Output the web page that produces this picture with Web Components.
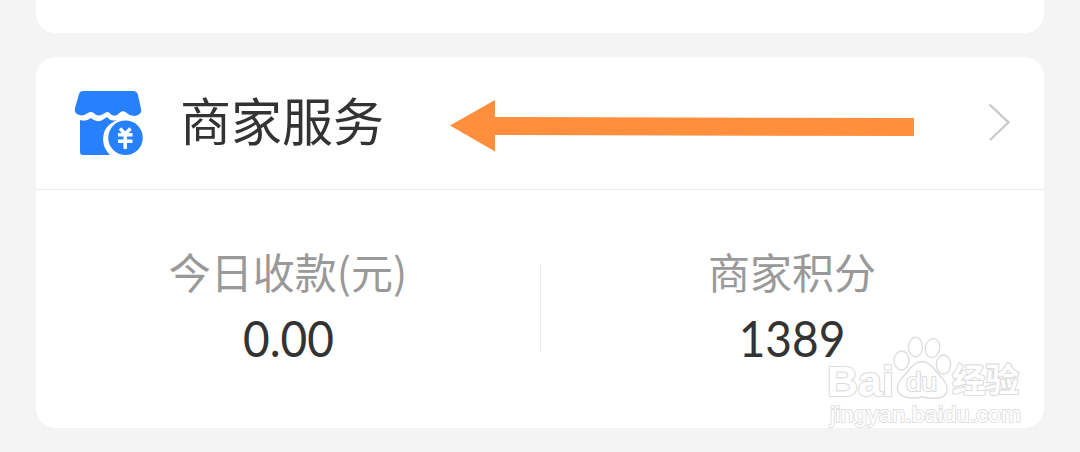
<!DOCTYPE html>
<html lang="zh-CN">
<head>
<meta charset="utf-8">
<title>商家服务</title>
<style>
  body {
    margin: 0;
    height: 452px;
    overflow: hidden;
    background: #f4f4f4;
    color: #333;
    font-family: "Noto Sans CJK SC", sans-serif;
  }
</style>
</head>
<body>
<service-page>
  <panel-card class="previous"></panel-card>
  <panel-card>
    <service-header slot="header">商家服务</service-header>
    <stat-item label="今日收款(元)">0.00</stat-item>
    <stat-item label="商家积分">1389</stat-item>
  </panel-card>
  <site-watermark slot="overlay"></site-watermark>
</service-page>

<script>
class ServicePage extends HTMLElement {
  connectedCallback() {
    this.attachShadow({ mode: 'open' });
    this.shadowRoot.innerHTML = `
      <style>
        :host {
          display: flex;
          flex-direction: column;
          gap: 24px;
          position: relative;
          height: 452px;
          padding: 0 36px;
          box-sizing: border-box;
        }

        ::slotted(.previous) {
          height: 33px;
          border-radius: 0 0 20px 20px;
        }
      </style>
      <slot></slot>
      <slot name="overlay"></slot>
    `;
  }
}

class PanelCard extends HTMLElement {
  connectedCallback() {
    this.attachShadow({ mode: 'open' });
    this.shadowRoot.innerHTML = `
      <style>
        :host {
          display: flex;
          flex-direction: column;
          flex-shrink: 0;
          height: 371px;
          background: #fff;
          border-radius: 20px;
          overflow: hidden;
        }

        .stats {
          display: grid;
          grid-template-columns: 504px 504px;
          padding-top: 51px;
          background: linear-gradient(#ececec, #ececec) 504px 74px / 1px 88px no-repeat;
        }
      </style>
      <slot name="header"></slot>
      <div class="stats"><slot></slot></div>
    `;
  }
}

class ServiceHeader extends HTMLElement {
  connectedCallback() {
    this.attachShadow({ mode: 'open' });
    this.shadowRoot.innerHTML = `
      <style>
        :host {
          display: flex;
          align-items: center;
          height: 133px;
          padding: 0 33px 0 37px;
          box-sizing: border-box;
          border-bottom: 1px solid #ececec;
        }

        svg {
          display: block;
          flex-shrink: 0;
        }

        .title {
          width: 204px;
          margin: -9px 66px 0 35px;
          font-size: 51px;
          line-height: 72px;
          white-space: nowrap;
        }

        .arrow {
          margin-top: 4px;
        }

        .chevron {
          margin-left: auto;
        }
      </style>
      <svg width="72" height="68" viewBox="73 89 72 68">
        <path fill="#2781ff" d="M83 91H133Q137 91 138 95L141 109Q142 113 138 115Q132 118 126 112.5Q123 110 120 112.5Q114 119 109 112.5Q107 111 104 113.5Q98 118 93 112.5Q90 111 87 113.5Q82 117 77 114Q74 112 75 108L79 94Q80 91 83 91Z"/>
        <path fill="#2781ff" d="M80 120Q86 122 91 118Q97 124 104 119L107 117Q111 122 117 120Q108 124 104.5 131Q100 145 110 155H83Q80 155 80 152Z"/>
        <circle cx="125.5" cy="137.8" r="17.3" fill="#2781ff"/>
        <path fill="none" stroke="#fff" stroke-width="3.5" d="M120 128.5L125.2 134L130.5 128.5M118 134.8H132.5M118 141.3H132.5M125.2 133.5V149"/>
      </svg>
      <div class="title"><slot></slot></div>
      <svg class="arrow" width="464" height="54" viewBox="450 98 464 54">
        <path fill="#ff8e3d" d="M450 125.5L495 100V117L914 118V136L495 135V151.5Z"/>
      </svg>
      <svg class="chevron" width="24" height="40" viewBox="987 103 24 40">
        <path fill="none" stroke="#c9c9c9" stroke-width="2.3" d="M989.5 104.5L1008.5 122.3L990 140"/>
      </svg>
    `;
  }
}

class StatItem extends HTMLElement {
  connectedCallback() {
    this.attachShadow({ mode: 'open' });
    this.shadowRoot.innerHTML = `
      <style>
        :host {
          display: flex;
          flex-direction: column;
          align-items: center;
          gap: 7px;
        }

        .label {
          font-size: 42px;
          line-height: 60px;
          color: #999;
          white-space: nowrap;
        }

        .value {
          font-family: Lato, sans-serif;
          font-size: 50px;
          line-height: 60px;
          transform: scaleX(0.92);
        }
      </style>
      <div class="label">${this.getAttribute('label')}</div>
      <div class="value"><slot></slot></div>
    `;
  }
}

class SiteWatermark extends HTMLElement {
  connectedCallback() {
    this.attachShadow({ mode: 'open' });
    this.shadowRoot.innerHTML = `
      <style>
        :host {
          position: absolute;
          left: 820px;
          top: 330px;
        }

        svg {
          display: block;
        }

        text {
          font-family: "Liberation Sans", sans-serif;
          font-weight: 700;
          paint-order: stroke;
        }

        .cjk {
          font-family: "Noto Sans CJK SC", sans-serif;
        }

        .address {
          font-weight: 400;
        }
      </style>
      <svg width="210" height="102" viewBox="820 330 210 102">
        <g fill="#fff" stroke="#dcdcdc" stroke-width="2.2" stroke-linejoin="round">
          <text x="827" y="396" font-size="43" textLength="67" lengthAdjust="spacingAndGlyphs">Bai</text>
          <g stroke-width="1.3">
            <ellipse cx="901.5" cy="360.5" rx="7.5" ry="9.5"/>
            <ellipse cx="915.5" cy="347" rx="7" ry="9.8"/>
            <ellipse cx="932.5" cy="348" rx="7.2" ry="9.5" transform="rotate(12 932.5 348)"/>
            <ellipse cx="943.5" cy="364.5" rx="7.2" ry="9.5"/>
            <path d="M908 371Q922 352 936 371Q939 375 943 379Q953 394 939 398Q931 399 922 397Q913 399 905 397Q892 392 901 379Q905 375 908 371Z"/>
          </g>
          <text x="906" y="391" font-size="25" textLength="31" lengthAdjust="spacingAndGlyphs" style="font-weight: 400">du</text>
          <text class="cjk" x="952" y="392" font-size="33" textLength="67" lengthAdjust="spacingAndGlyphs">经验</text>
          <text class="address" x="830" y="422" font-size="22" textLength="191" lengthAdjust="spacingAndGlyphs" stroke-width="1.8" stroke="#e0e0e0">jingyan.baidu.com</text>
        </g>
      </svg>
    `;
  }
}

customElements.define('service-page', ServicePage);
customElements.define('panel-card', PanelCard);
customElements.define('service-header', ServiceHeader);
customElements.define('stat-item', StatItem);
customElements.define('site-watermark', SiteWatermark);
</script>
</body>
</html>
